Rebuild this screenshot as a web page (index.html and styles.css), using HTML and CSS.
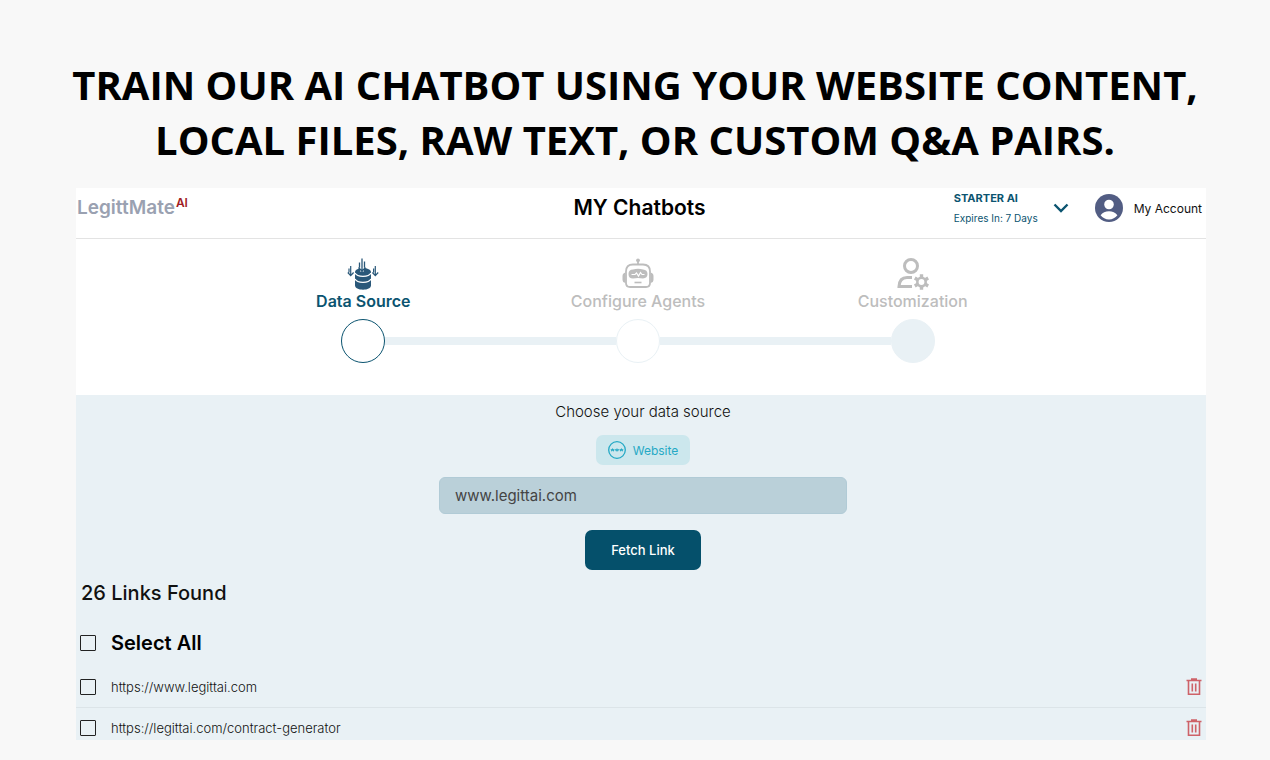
FILE: index.html
```html
<!DOCTYPE html>
<html lang="en">
<head>
    <meta charset="UTF-8">
    <meta name="viewport" content="width=device-width, initial-scale=1.0">
    <title>MY Chatbots</title>
    <link rel="stylesheet" href="styles.css">
</head>
<body>
    <h1 class="headline">TRAIN OUR AI CHATBOT USING YOUR WEBSITE CONTENT,<br>LOCAL FILES, RAW TEXT, OR CUSTOM Q&amp;A PAIRS.</h1>

    <main class="app">
        <header class="topbar">
            <a class="brand" href="#">LegittMate<span class="brand-ai">AI</span></a>
            <h2 class="page-title">MY Chatbots</h2>
            <div class="topbar-right">
                <button class="plan" type="button">
                    <span class="plan-text">
                        <strong class="plan-name">STARTER AI</strong>
                        <span class="plan-expiry">Expires In: 7 Days</span>
                    </span>
                    <svg class="chevron" viewBox="0 0 16 10" width="16" height="10" fill="none" stroke="currentColor" stroke-width="2.4" aria-hidden="true">
                        <path d="M1.500 1.500 8 8l6.500-6.500"/>
                    </svg>
                </button>
                <a class="account" href="#">
                    <svg viewBox="0 0 28 28" width="28" height="28" aria-hidden="true">
                        <circle cx="14" cy="14" r="14" fill="#525d83"/>
                        <circle cx="14" cy="10.500" r="4.800" fill="#fff"/>
                        <path d="M5.600 21.200c1.800-2.600 5-4 8.400-4s6.600 1.400 8.400 4c-2 2.700-5 4.200-8.400 4.200s-6.400-1.500-8.400-4.200z" fill="#fff"/>
                    </svg>
                    My Account
                </a>
            </div>
        </header>

        <ol class="steps">
            <li class="step active">
                <svg viewBox="0 0 32 32" width="32" height="32" fill="none" stroke="currentColor" stroke-width="1.300" aria-hidden="true">
                    <path fill="currentColor" stroke="none" d="M8 14c0-2.300 3.600-4 8-4s8 1.700 8 4v13.500c0 2.400-3.600 4.200-8 4.200s-8-1.800-8-4.200z"/>
                    <path stroke="#fff" stroke-width="1.300" d="M8 15c1.200 2.400 4.300 3.300 8 3.300s6.800-.9 8-3.300M8 21c1.200 2.400 4.300 3.300 8 3.300s6.800-.9 8-3.300"/>
                    <path stroke="#fff" stroke-width="4" d="M15 5v8.500"/>
                    <path d="M15 .5v12.500M11.500 9.500l3.500 3.800 3.500-3.800M12.500 4.500v5M17.500 3.500v6"/>
                    <path stroke-width="1.200" d="M3.700 8v9.500M.8 14.500l2.900 3.200 2.900-3.200M2 10.500v4M28.300 8v9.500M25.400 14.500l2.900 3.200 2.900-3.200M26.600 10.500v4"/>
                </svg>
                <span class="step-label">Data Source</span>
                <span class="step-track"><span class="line"></span><span class="dot"></span><span class="line"></span></span>
            </li>
            <li class="step">
                <svg viewBox="0 0 32 32" width="32" height="32" fill="none" stroke="currentColor" stroke-width="1.800" aria-hidden="true">
                    <circle cx="16" cy="2.300" r="1.900" fill="currentColor" stroke="none"/>
                    <path d="M16 3v4"/>
                    <path d="M11 6.500h10q7 0 7 7v11.500q0 4-4 4H8q-4 0-4-4V13.500q0-7 7-7z"/>
                    <path d="M3.500 14.500Q.5 15 .5 18v3.500q0 3 3 3.500zM28.500 14.500q3 .5 3 3.500v3.500q0 3-3 3.500z" fill="currentColor" stroke="none"/>
                    <path d="M11 11.500q5-1.600 10 0 4.500.3 4.500 4.500T21 20.500q-5-.8-10 0-4.500 0-4.500-4.500t4.500-4.500z" fill="currentColor" stroke="none"/>
                    <path stroke="#fff" stroke-width="1.200" d="M9.500 16.500h3.500l1.500-1.500 2 3 2-3.500 1.500 2h2.500"/>
                    <path stroke-width="1.600" d="M12.500 24.500h7"/>
                </svg>
                <span class="step-label">Configure Agents</span>
                <span class="step-track"><span class="line"></span><span class="dot"></span><span class="line"></span></span>
            </li>
            <li class="step last">
                <svg viewBox="0 0 32 32" width="32" height="32" fill="none" stroke="currentColor" stroke-width="3" aria-hidden="true">
                    <circle cx="14" cy="8" r="6.500"/>
                    <path d="M15 19.500H10Q2.500 19.500 2 28.500H15"/>
                    <circle cx="24.500" cy="24" r="4.200" stroke-width="2.600"/>
                    <path stroke-width="3.400" d="M24.500 16.200v3.300M24.500 28.500v3.300M17.800 20.100l2.800 1.600M28.400 26.300l2.800 1.600M17.800 27.900l2.800-1.600M28.400 21.700l2.800-1.600"/>
                </svg>
                <span class="step-label">Customization</span>
                <span class="step-track"><span class="line"></span><span class="dot"></span><span class="line"></span></span>
            </li>
        </ol>

        <section class="source">
            <form class="fetch-form">
                <label class="prompt" for="siteUrl">Choose your data source</label>
                <button class="source-type" type="button">
                    <svg viewBox="0 0 18 18" width="18" height="18" fill="none" stroke="currentColor" aria-hidden="true">
                        <circle cx="9" cy="9" r="8.300" stroke-width="1.300"/>
                        <path stroke-width="1.100" d="M3 8.200l.8 1.500.8-1.500.8 1.500.8-1.500M7.400 8.200l.8 1.500.8-1.500.8 1.500.8-1.500M11.800 8.200l.8 1.500.8-1.500.8 1.500.8-1.500"/>
                    </svg>
                    Website
                </button>
                <input class="url" id="siteUrl" type="text" value="www.legittai.com">
                <button class="fetch" type="button">Fetch Link</button>
            </form>

            <h3 class="found">26 Links Found</h3>
            <label class="select-all"><input type="checkbox">Select All</label>
            <ul class="links">
                <li class="link-row">
                    <label><input type="checkbox">https://www.legittai.com</label>
                    <button class="delete" type="button" aria-label="Delete link">
                        <svg viewBox="0 0 16 18" width="16" height="18" fill="none" stroke="currentColor" stroke-width="1.600" aria-hidden="true">
                            <path d="M.5 2.500h15M5 1h6M2.500 3v13.200h11V3M6.300 5.500v8M9.700 5.500v8"/>
                        </svg>
                    </button>
                </li>
                <li class="link-row">
                    <label><input type="checkbox">https://legittai.com/contract-generator</label>
                    <button class="delete" type="button" aria-label="Delete link">
                        <svg viewBox="0 0 16 18" width="16" height="18" fill="none" stroke="currentColor" stroke-width="1.600" aria-hidden="true">
                            <path d="M.5 2.500h15M5 1h6M2.500 3v13.200h11V3M6.300 5.500v8M9.700 5.500v8"/>
                        </svg>
                    </button>
                </li>
            </ul>
        </section>
    </main>
</body>
</html>
```

FILE: styles.css
```css
* {
    box-sizing: border-box;
}
body {
    margin: 0;
    padding: 57px 64px 20px 76px;
    font-family: Inter, "Liberation Sans", sans-serif;
    background-color: #f8f8f8;
    color: #111;
}
h1, h2, h3, ol, ul {
    margin: 0;
    padding: 0;
}
ol, ul {
    list-style: none;
}
button {
    font-family: inherit;
    border: none;
    padding: 0;
    background: none;
    cursor: pointer;
}
a {
    color: inherit;
    text-decoration: none;
}
svg {
    display: block;
}
.headline {
    margin: 0 -40px 21px -52px;
    font-family: "Open Sans", sans-serif;
    font-size: 40px;
    line-height: 55px;
    font-weight: 700;
    text-align: center;
    color: #000;
}
.app {
    background: white;
}

/* top bar */
.topbar {
    display: grid;
    grid-template-columns: 1fr auto 1fr;
    align-items: center;
    height: 51px;
    padding: 0 4px 13px 1px;
    border-bottom: 1px solid #e3e3e3;
}
.brand {
    display: flex;
    align-items: flex-start;
    gap: 1px;
    font-size: 19px;
    line-height: 24px;
    font-weight: 600;
    color: #9aa1b1;
}
.brand-ai {
    font-size: 12px;
    line-height: 14px;
    color: #a01c24;
}
.page-title {
    font-size: 21px;
    line-height: 24px;
    font-weight: 600;
    color: #000;
}
.topbar-right {
    display: flex;
    justify-content: flex-end;
    align-items: center;
    gap: 26px;
}
.plan {
    display: flex;
    align-items: center;
    gap: 15px;
    color: #0b5470;
    text-align: left;
}
.plan-text {
    display: flex;
    flex-direction: column;
    font-size: 10px;
    line-height: 20px;
}
.plan-name {
    font-size: 11px;
    font-weight: 700;
}
.account {
    display: flex;
    align-items: center;
    gap: 11px;
    font-size: 12px;
}

/* progress steps */
.steps {
    display: grid;
    grid-template-columns: repeat(3, 1fr);
    padding: 19px 156px 32px 150px;
}
.step {
    display: flex;
    flex-direction: column;
    align-items: center;
    color: #bdbdbd;
}
.step-label {
    margin-bottom: 6px;
    font-size: 16px;
    line-height: 23px;
    font-weight: 500;
}
.step-track {
    display: flex;
    align-items: center;
    width: 100%;
}
.line {
    flex: 1;
    height: 8px;
    background: #e9f1f5;
}
.step:first-child .line:first-child,
.step:last-child .line:last-child {
    background: none;
}
.dot {
    width: 44px;
    height: 44px;
    border: 1px solid #e9f1f5;
    border-radius: 50%;
}
.active {
    color: #2a5879;
}
.active .step-label {
    font-weight: 600;
    color: #0b5470;
}
.active .dot {
    border-color: #0b5470;
}
.last .dot {
    background: #e9f1f5;
}

/* data source */
.source {
    background: #e9f1f5;
}
.fetch-form {
    display: flex;
    flex-direction: column;
    align-items: center;
    padding: 6px 0 8px 4px;
}
.prompt {
    margin-bottom: 12px;
    font-size: 15px;
    line-height: 22px;
    font-weight: 300;
}
.source-type {
    display: flex;
    align-items: center;
    gap: 7px;
    height: 30px;
    margin-bottom: 12px;
    padding: 0 12px;
    border-radius: 7px;
    background: #cce7ed;
    color: #25a9c5;
    font-size: 12px;
}
.url {
    width: 36%;
    min-width: 408px;
    height: 37px;
    margin-bottom: 16px;
    padding: 0 15px;
    border: 1px solid #b1cbd6;
    border-radius: 6px;
    background: #bad0d9;
    color: #444;
    font-family: inherit;
    font-size: 15px;
}
.fetch {
    height: 40px;
    padding: 0 26px;
    border-radius: 7px;
    background: #05506b;
    color: white;
    font-size: 13px;
    font-weight: 500;
}

/* found links */
.found {
    padding-left: 5px;
    font-size: 20px;
    line-height: 30px;
    font-weight: 500;
}
.select-all {
    display: flex;
    align-items: center;
    height: 58px;
    padding: 12px 0 0 4px;
    font-size: 20px;
    font-weight: 600;
    color: #000;
}
input[type="checkbox"] {
    appearance: none;
    width: 16px;
    height: 16px;
    margin: 0 15px 0 0;
    border: 1px solid #222;
    border-radius: 1px;
}
.link-row {
    display: flex;
    justify-content: space-between;
    align-items: center;
    height: 42px;
    padding: 0 4px;
    border-bottom: 1px solid #dce4e8;
}
.link-row:last-child {
    height: 32px;
    padding-top: 8px;
    border-bottom: none;
}
.link-row label {
    display: flex;
    align-items: center;
    font-size: 13px;
    font-weight: 300;
}
.delete {
    color: #ce6268;
}
```
